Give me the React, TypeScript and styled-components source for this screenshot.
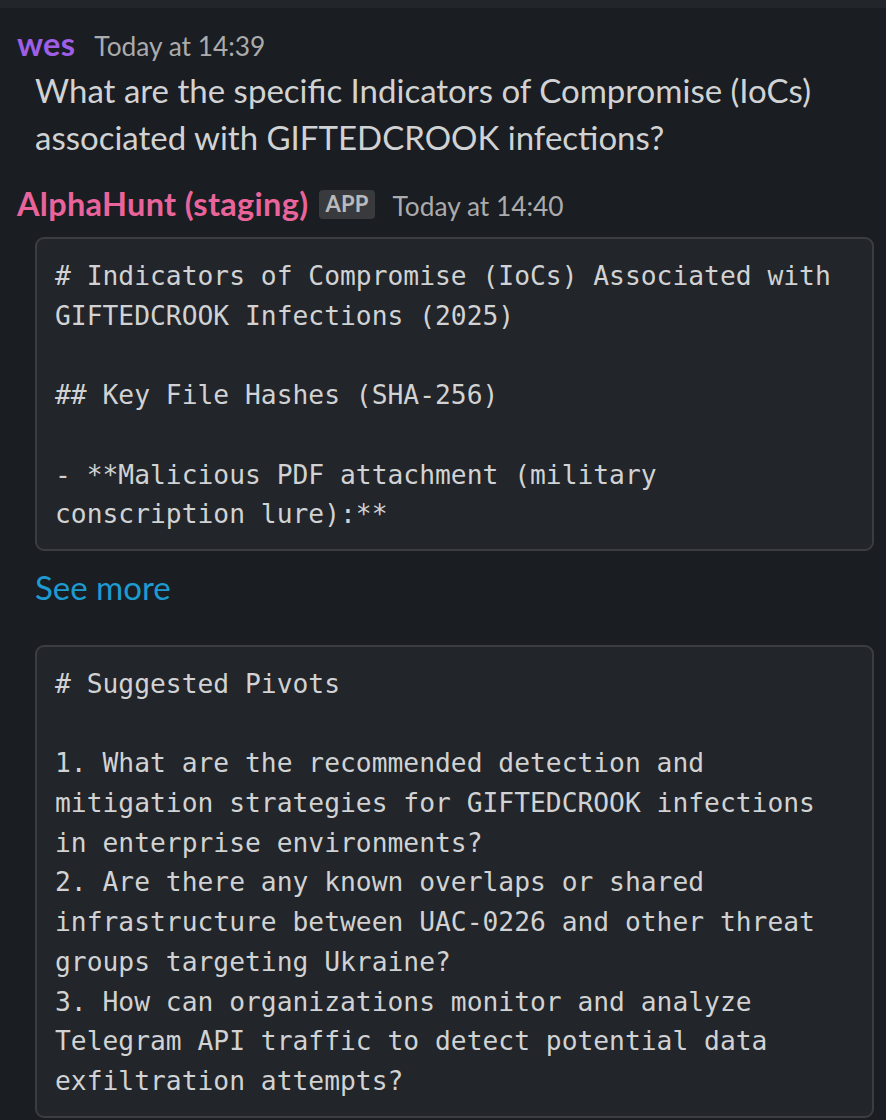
import React from "react";
import styled, { createGlobalStyle } from "styled-components";

const Global = createGlobalStyle`
  html, body { margin: 0; padding: 0; background: #1a1d21; }
  body { font-family: Lato, "Noto Sans", sans-serif; }
`;

const Page = styled.div`
  width: 886px;
  height: 1120px;
  background: #1a1d21;
  overflow: hidden;
  display: flex;
  flex-direction: column;
`;

const TopStrip = styled.div`
  height: 8px;
  background: #222529;
  flex: none;
`;

const Message = styled.section<{ $top: number }>`
  display: flex;
  flex-direction: column;
  padding: ${(p) => p.$top}px 12px 0 17px;
`;

const Header = styled.div`
  display: flex;
  align-items: baseline;
  height: 36px;
  line-height: 36px;
`;

const Name = styled.span<{ $color: string }>`
  font-family: Lato, sans-serif;
  font-weight: 700;
  font-size: 32.5px;
  letter-spacing: 0.3px;
  color: ${(p) => p.$color};
`;

const Badge = styled.span`
  display: inline-flex;
  align-items: center;
  align-self: center;
  height: 29px;
  padding: 0 6px;
  margin-left: 11px;
  border-radius: 4px;
  background: #393a3e;
  color: #b9babc;
  font-family: Lato, sans-serif;
  font-weight: 700;
  font-size: 22px;
  letter-spacing: 0.2px;
`;

const Time = styled.span<{ $gap: number }>`
  margin-left: ${(p) => p.$gap}px;
  font-size: 26.3px;
  color: #ababad;
`;

const Body = styled.div`
  padding-left: 18px;
  display: flex;
  flex-direction: column;
`;

const Text = styled.p`
  margin: 5px 0 0;
  font-size: 33px;
  line-height: 47px;
  color: #d1d2d3;
`;

const CodeBox = styled.pre<{ $mt: number }>`
  margin: ${(p) => p.$mt}px 0 0;
  width: 839px;
  box-sizing: border-box;
  padding: 18px 18px 14px;
  background: #222529;
  border: 2px solid #3b3d41;
  border-radius: 9px;
  font-family: "DejaVu Sans Mono", monospace;
  font-size: 26.3px;
  line-height: 39.7px;
  color: #d1d2d3;
  white-space: pre-wrap;
  word-break: normal;
`;

const SeeMore = styled.a`
  display: block;
  margin-top: 13px;
  font-size: 33px;
  line-height: 47px;
  color: #1d9bd1;
  text-decoration: none;
`;

const ioc = `# Indicators of Compromise (IoCs) Associated with GIFTEDCROOK Infections (2025)

## Key File Hashes (SHA-256)

- **Malicious PDF attachment (military conscription lure):**`;

const pivots = `# Suggested Pivots

1. What are the recommended detection and mitigation strategies for GIFTEDCROOK infections in enterprise environments?
2. Are there any known overlaps or shared infrastructure between UAC-0226 and other threat groups targeting Ukraine?
3. How can organizations monitor and analyze Telegram API traffic to detect potential data exfiltration attempts?`;

export default function App() {
  return (
    <Page>
      <Global />
      <TopStrip />
      <Message $top={18}>
        <Header>
          <Name $color="#9e5ee6">wes</Name>
          <Time $gap={19}>Today at 14:39</Time>
        </Header>
        <Body>
          <Text>
            What are the specific Indicators of Compromise (IoCs) associated with GIFTEDCROOK infections?
          </Text>
        </Body>
      </Message>
      <Message $top={25}>
        <Header>
          <Name $color="#e8649b">AlphaHunt (staging)</Name>
          <Badge>APP</Badge>
          <Time $gap={18}>Today at 14:40</Time>
        </Header>
        <Body>
          <CodeBox $mt={15}>{ioc}</CodeBox>
          <SeeMore href="#">See more</SeeMore>
          <CodeBox $mt={34}>{pivots}</CodeBox>
        </Body>
      </Message>
    </Page>
  );
}
